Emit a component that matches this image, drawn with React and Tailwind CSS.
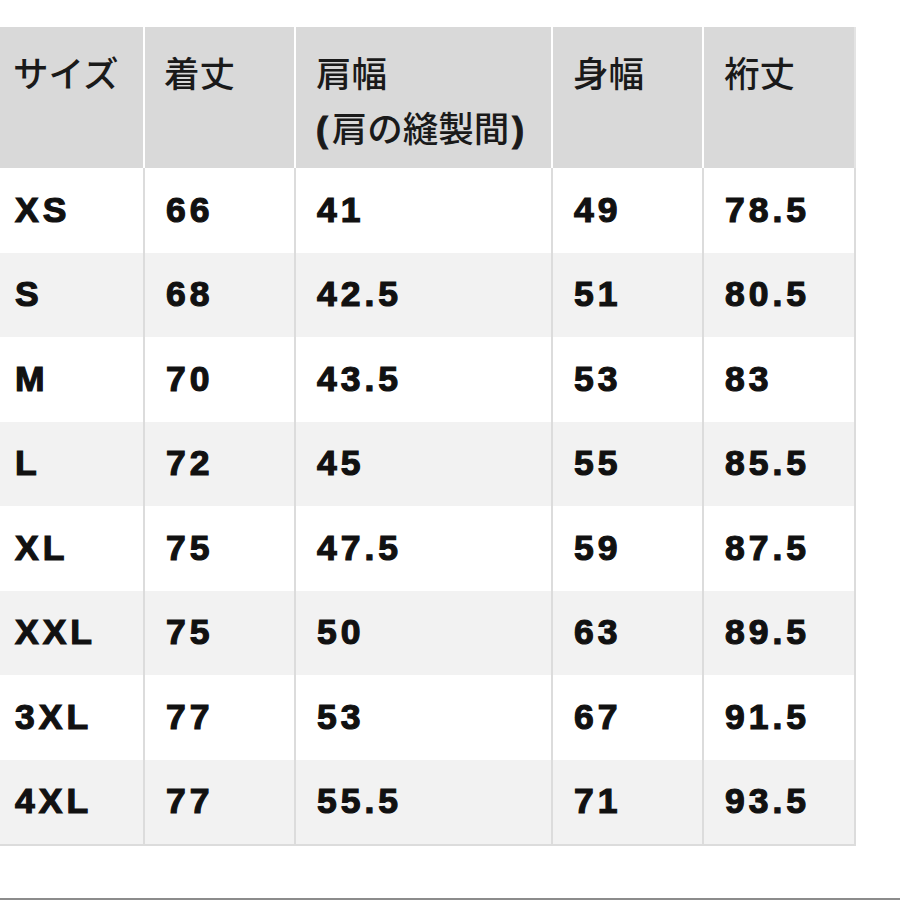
import React from "react";

const rows = [
  ["XS", "66", "41", "49", "78.5"],
  ["S", "68", "42.5", "51", "80.5"],
  ["M", "70", "43.5", "53", "83"],
  ["L", "72", "45", "55", "85.5"],
  ["XL", "75", "47.5", "59", "87.5"],
  ["XXL", "75", "50", "63", "89.5"],
  ["3XL", "77", "53", "67", "91.5"],
  ["4XL", "77", "55.5", "71", "93.5"],
];

const cjk = { fontFamily: '"Noto Sans CJK JP", "Noto Sans", sans-serif' };
const num = { fontFamily: '"Liberation Sans", Arial, sans-serif' };

export default function App() {
  return (
    <div className="w-[900px] h-[900px] bg-white flex flex-col overflow-hidden">
      <div className="pt-[27px]">
        <div className="w-[856px]">
          <div
            className="grid grid-cols-[145px_151px_257px_151px_152px] h-[141px] bg-[#d9d9d9] text-[#1a1a1a] text-[35.5px] leading-[55px] font-medium"
            style={cjk}
          >
            <div className="pl-[13px] pt-[17px] border-r-2 border-white">サイズ</div>
            <div className="pl-[19px] pt-[17px] border-r-2 border-white">着丈</div>
            <div className="pl-[20px] pt-[17px] border-r-2 border-white">
              <div>肩幅</div>
              <div>
                <span className="font-bold mr-[4px] [-webkit-text-stroke:1px_#1a1a1a]" style={num}>(</span>肩の縫製間<span className="font-bold ml-[3px] [-webkit-text-stroke:1px_#1a1a1a]" style={num}>)</span>
              </div>
            </div>
            <div className="pl-[20px] pt-[17px] border-r-2 border-white">身幅</div>
            <div className="pl-[20px] pt-[17px] border-r-2 border-[#e4e4e4]">裄丈</div>
          </div>
          <div className="border-b-2 border-[#dcdcdc]">
            {rows.map((r, i) => (
              <div
                key={r[0]}
                className={`grid grid-cols-[145px_151px_257px_151px_152px] h-[84.5px] text-[35.5px] font-bold tracking-[4px] text-[#111] [-webkit-text-stroke:1.2px_#111] ${
                  i % 2 === 1 ? "bg-[#f2f2f2]" : "bg-white"
                }`}
                style={num}
              >
                {r.map((c, j) => (
                  <div
                    key={j}
                    className={`flex items-center border-r-2 border-[#dcdcdc] ${
                      j === 0 ? "pl-[15px]" : "pl-[21px]"
                    }`}
                  >
                    {c}
                  </div>
                ))}
              </div>
            ))}
          </div>
        </div>
      </div>
      <div className="flex-1" />
      <div className="h-[2px] bg-[#8c8c8c]" />
    </div>
  );
}
